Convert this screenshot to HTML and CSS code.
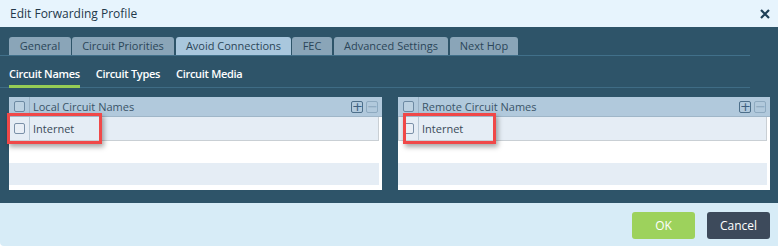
FILE: index.html
```html
<!DOCTYPE html>
<html>
<head>
<meta charset="utf-8">
<link rel="stylesheet" href="styles.css">
</head>
<body>
<div class="dialog">
  <div class="titlebar">
    <span class="title">Edit Forwarding Profile</span>
    <svg class="close" width="10" height="10" viewBox="0 0 10 10"><path d="M1 1L9 9M9 1L1 9" stroke="#1d3f57" stroke-width="2.2"/></svg>
  </div>
  <div class="body">
    <div class="tabs">
      <div class="tab t1">General</div>
      <div class="tab t2">Circuit Priorities</div>
      <div class="tab t3 active">Avoid Connections</div>
      <div class="tab t4">FEC</div>
      <div class="tab t5">Advanced Settings</div>
      <div class="tab t6">Next Hop</div>
    </div>
    <div class="subtabs">
      <div class="subtab active">Circuit Names</div>
      <div class="subtab">Circuit Types</div>
      <div class="subtab">Circuit Media</div>
    </div>
    <div class="grids">
      <div class="grid">
        <div class="ghead">
          <span class="cb"></span><span class="sep"></span><span class="gtitle">Local Circuit Names</span>
          <span class="btn plus">+</span><span class="btn minus">−</span>
        </div>
        <div class="row sel"><span class="cb"></span><span class="sep"></span><span class="cell">Internet</span></div>
        <div class="row white"></div>
        <div class="row light"></div>
        <div class="hl hl-left"></div>
      </div>
      <div class="grid">
        <div class="ghead">
          <span class="cb"></span><span class="sep"></span><span class="gtitle">Remote Circuit Names</span>
          <span class="btn plus">+</span><span class="btn minus">−</span>
        </div>
        <div class="row sel"><span class="cb"></span><span class="sep"></span><span class="cell">Internet</span></div>
        <div class="row white"></div>
        <div class="row light"></div>
        <div class="hl hl-right"></div>
      </div>
    </div>
  </div>
  <div class="footer">
    <button class="ok">OK</button>
    <button class="cancel">Cancel</button>
  </div>
</div>
</body>
</html>
```
FILE: styles.css
```css
* { box-sizing: border-box; }
html, body { margin: 0; padding: 0; background: #ffffff; }
body { font-family: "Open Sans", "Liberation Sans", sans-serif; }
.dialog { width: 778px; height: 246px; display: flex; flex-direction: column; }
.titlebar {
  height: 27px; background: #e7f4fd; display: flex; align-items: center;
  justify-content: space-between; padding: 0 8px 0 10px;
}
.title { font-size: 12px; color: #23384a; }
.close { display: block; }
.body { background: #2e5469; height: 176px; padding-top: 10px; }
.tabs {
  display: flex; padding-left: 9px; margin-right: 28px;
  border-bottom: 1px solid #41708a; height: 19px;
}
.tab {
  height: 18px; background: #8aa5b8; color: #2b4658; text-align: center;
  font-size: 11px; line-height: 18px; border-radius: 3px 3px 0 0;
}
.t1 { width: 62px; }
.t2 { width: 102px; margin-left: 1px; }
.t3 { width: 115px; margin-left: 2px; }
.t4 { width: 40px; margin-left: 1px; }
.t5 { width: 114px; margin-left: 2px; }
.t6 { width: 68px; margin-left: 2px; }
.tab.active { background: #a9c7dd; }
.subtabs {
  display: flex; gap: 16px; padding-left: 9px; margin-right: 28px;
  border-bottom: 1px solid #3f6c85; height: 32px; align-items: flex-end;
}
.subtab {
  color: #ffffff; font-size: 11px; font-weight: 600; height: 22px;
  border-bottom: 3px solid transparent; margin-bottom: -1px;
  letter-spacing: -0.3px;
}
.subtab.active { border-bottom-color: #96cc55; }
.grids { display: flex; gap: 16px; padding: 9px 8px 0 9px; }
.grid { position: relative; width: 373px; height: 93px; background: #ffffff; }
.grid:last-child { width: 372px; }
.ghead {
  height: 20px; background: #b1c9dc; display: flex; align-items: center;
  border-bottom: 1px solid #9fb6c8;
}
.cb {
  width: 11px; height: 11px; border: 1px solid #6d8aa3; border-radius: 2px;
  margin-left: 5px; margin-right: 4px; background: rgba(255,255,255,0.15);
}
.sep { width: 1px; align-self: stretch; background: #9ab2c6; }
.gtitle { font-size: 11px; color: #3a5468; margin-left: 3px; flex: 1; }
.btn {
  width: 12px; height: 12px; border: 1px solid #4d6f8a; border-radius: 2px;
  font-size: 13px; line-height: 9px; text-align: center; color: #3e6080;
  margin-right: 3px; font-family: "DejaVu Sans", sans-serif;
}
.btn.minus { border-color: #8eaac0; color: #8aa6bd; margin-right: 4px; }
.row { height: 23px; display: flex; align-items: center; }
.row.sel { height: 24px; background: #e5edf5; border: 1px solid #c9cfd4; border-top: none; margin-right: 3px; }
.row.sel .cb { margin-left: 4px; border-color: #7a90a8; }
.row.sel .sep { background: #b9c9d6; }
.row.white { background: #ffffff; height: 22px; }
.row.light { background: #e5edf5; height: 22px; margin-right: 3px; }
.cell { font-size: 11px; color: #3a4a58; margin-left: 3px; }
.hl {
  position: absolute; top: 16px; height: 31px; border: 3px solid #f04848;
  box-shadow: 2px 3px 5px rgba(0,0,0,0.35);
}
.hl-left { left: -2px; width: 95px; }
.hl-right { left: 5px; width: 93px; }
.footer {
  flex: 1; background: #d7ecf7; display: flex; justify-content: flex-end;
  align-items: flex-start; padding: 9px 8px 0 0; gap: 12px;
  border-radius: 0 0 0 4px;
}
button {
  height: 27px; border: none; border-radius: 3px; color: #ffffff;
  font-family: "Open Sans", "Liberation Sans", sans-serif; font-size: 12px;
}
.ok { width: 63px; background: #9dd25c; }
.cancel { width: 63px; background: #3d4a5b; }
```
